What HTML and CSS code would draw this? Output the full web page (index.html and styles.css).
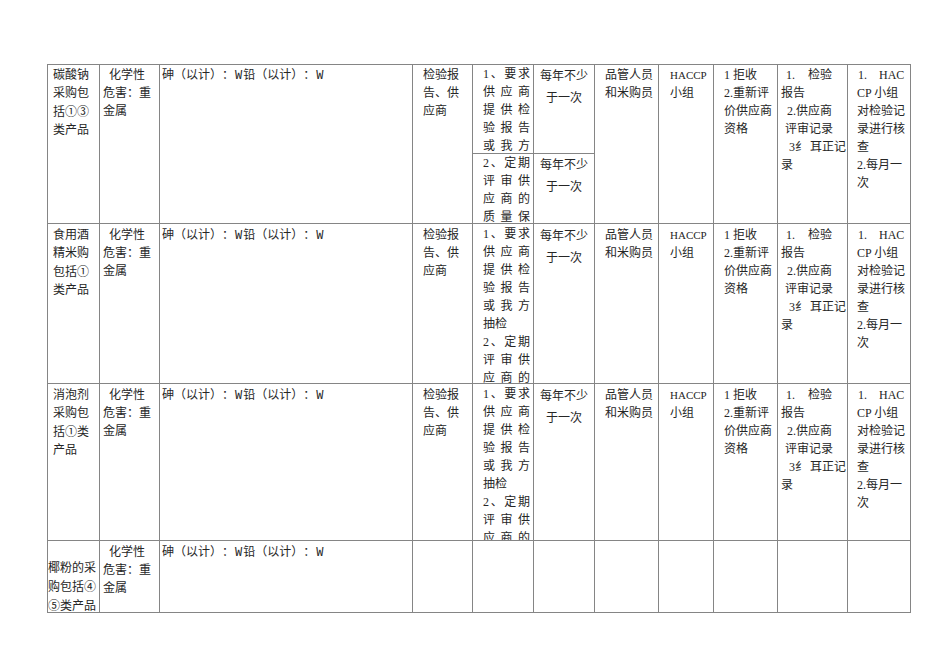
FILE: index.html
```html
<!DOCTYPE html>
<html lang="zh-CN">
<head>
<meta charset="utf-8">
<title>采购控制表</title>
<link rel="stylesheet" href="styles.css">
</head>
<body>
<div class="sheet">
  <div class="grid">
    <!-- row 1 -->
    <div class="c c1 s2">碳酸钠<br>采购包<br>括<span class="cn">①</span><span class="cn">③</span><br>类产品</div>
    <div class="c c2 s2">化学性危害：重金属</div>
    <div class="c c3 s2">砷（以计）：<span class="w">W</span>铅（以计）：<span class="w">W</span></div>
    <div class="c c4 s2">检验报告、供应商</div>
    <div class="c c5"><div class="p">1、要求供应商提供检验报告或我方抽检</div></div>
    <div class="c c6">每年不少于一次</div>
    <div class="c c7 s2">品管人员和米购员</div>
    <div class="c c8 s2"><span class="lat">HACCP</span><br>小组</div>
    <div class="c c9 s2">1 拒收<br>2.重新评<br>价供应商<br>资格</div>
    <div class="c c10 s2">
      <div><span class="n1">1.</span>检验</div>
      <div>报告</div>
      <div class="i6">2.供应商</div>
      <div class="i4">评审记录</div>
      <div class="i8">3纟 耳正记</div>
      <div>录</div>
    </div>
    <div class="c c11 s2">
      <div><span class="n2">1.</span>HAC</div>
      <div>CP 小组</div>
      <div>对检验记</div>
      <div>录进行核</div>
      <div>查</div>
      <div>2.每月一</div>
      <div>次</div>
    </div>
    <div class="c c5 sub"><div class="p">2、定期评审供应商的质量保证能力</div></div>
    <div class="c c6 sub">每年不少于一次</div>

    <!-- row 2 -->
    <div class="c c1 lo">食用酒<br>精米购<br>包括<span class="cn">①</span><br>类产品</div>
    <div class="c c2 lo">化学性危害：重金属</div>
    <div class="c c3 lo">砷（以计）：<span class="w">W</span>铅（以计）：<span class="w">W</span></div>
    <div class="c c4 lo">检验报告、供应商</div>
    <div class="c c5 lo"><div class="p">1、要求供应商提供检验报告或我方抽检</div><div class="p">2、定期评审供应商的质量保证能力</div></div>
    <div class="c c6 lo">每年不少于一次</div>
    <div class="c c7 lo">品管人员和米购员</div>
    <div class="c c8 lo"><span class="lat">HACCP</span><br>小组</div>
    <div class="c c9 lo">1 拒收<br>2.重新评<br>价供应商<br>资格</div>
    <div class="c c10 lo">
      <div><span class="n1">1.</span>检验</div>
      <div>报告</div>
      <div class="i6">2.供应商</div>
      <div class="i4">评审记录</div>
      <div class="i8">3纟 耳正记</div>
      <div>录</div>
    </div>
    <div class="c c11 lo">
      <div><span class="n2">1.</span>HAC</div>
      <div>CP 小组</div>
      <div>对检验记</div>
      <div>录进行核</div>
      <div>查</div>
      <div>2.每月一</div>
      <div>次</div>
    </div>

    <!-- row 3 -->
    <div class="c c1 lo">消泡剂<br>采购包<br>括<span class="cn">①</span>类<br>产品</div>
    <div class="c c2 lo">化学性危害：重金属</div>
    <div class="c c3 lo">砷（以计）：<span class="w">W</span>铅（以计）：<span class="w">W</span></div>
    <div class="c c4 lo">检验报告、供应商</div>
    <div class="c c5 lo"><div class="p">1、要求供应商提供检验报告或我方抽检</div><div class="p">2、定期评审供应商的质量保证能力</div></div>
    <div class="c c6 lo">每年不少于一次</div>
    <div class="c c7 lo">品管人员和米购员</div>
    <div class="c c8 lo"><span class="lat">HACCP</span><br>小组</div>
    <div class="c c9 lo">1 拒收<br>2.重新评<br>价供应商<br>资格</div>
    <div class="c c10 lo">
      <div><span class="n1">1.</span>检验</div>
      <div>报告</div>
      <div class="i6">2.供应商</div>
      <div class="i4">评审记录</div>
      <div class="i8">3纟 耳正记</div>
      <div>录</div>
    </div>
    <div class="c c11 lo">
      <div><span class="n2">1.</span>HAC</div>
      <div>CP 小组</div>
      <div>对检验记</div>
      <div>录进行核</div>
      <div>查</div>
      <div>2.每月一</div>
      <div>次</div>
    </div>

    <!-- row 4 -->
    <div class="c c1 last lo">椰粉的采<br>购包括<span class="cn">④</span><br><span class="cn">⑤</span>类产品</div>
    <div class="c c2 lo">化学性危害：重金属</div>
    <div class="c c3 lo">砷（以计）：<span class="w">W</span>铅（以计）：<span class="w">W</span></div>
    <div class="c"></div>
    <div class="c"></div>
    <div class="c"></div>
    <div class="c"></div>
    <div class="c"></div>
    <div class="c"></div>
    <div class="c"></div>
    <div class="c"></div>
  </div>
</div>
</body>
</html>
```

FILE: styles.css
```css
html, body {
  margin: 0;
  padding: 0;
  background: #ffffff;
}

.sheet {
  padding: 64px 0 0 47px;
}

.grid {
  display: grid;
  width: max-content;
  grid-template-columns: 51px 59px 252px 59px 60px 60px 63px 54px 63px 69px 62px;
  grid-template-rows: 88px 69px 159px 156px 71px;
  gap: 1px;
  padding: 1px;
  background: #858585;
}

.c {
  background: #ffffff;
  overflow: hidden;
  font-family: "Liberation Serif", "Noto Sans CJK SC", serif;
  font-size: 12px;
  line-height: 18px;
  color: #262626;
  padding-top: 1px;
  box-sizing: border-box;
  text-spacing-trim: space-all;
  white-space: normal;
}

.s2 {
  grid-row: span 2;
}

.lo {
  padding-top: 2px;
}

.cn {
  display: inline-block;
  width: 12px;
  text-align: center;
  text-indent: 0;
  font-family: "Noto Sans CJK SC", sans-serif;
  font-size: 12px;
}

.c1 {
  padding-left: 5px;
  padding-right: 0;
  white-space: nowrap;
}

.c1.last {
  padding-left: 0;
  padding-top: 18px;
}

.c2 {
  padding-left: 3px;
  padding-right: 5px;
  text-indent: 6px;
}

.c3 {
  padding-left: 2px;
}

.w {
  font-family: "Liberation Mono", monospace;
  font-size: 12px;
  margin: 0 1px;
}

.c4 {
  padding-left: 10px;
  padding-right: 3px;
}

.c5 {
  padding-left: 10px;
  padding-right: 3px;
  padding-top: 0;
  text-align: justify;
}

.c5.lo {
  padding-top: 1px;
}

.c6 {
  text-align: center;
  line-height: 22px;
  padding: 0 4px;
}

.c6.lo {
  padding-top: 1px;
}

.c7 {
  padding-left: 10px;
}

.c8 {
  padding-left: 11px;
}

.lat {
  font-size: 11px;
}

.c9 {
  padding-left: 10px;
}

.c10 {
  padding-left: 3px;
}

.n1 {
  display: inline-block;
  margin-left: 5px;
  width: 22px;
}

.i6 {
  padding-left: 6px;
}

.i4 {
  padding-left: 4px;
}

.i8 {
  padding-left: 8px;
}

.c11 {
  padding-left: 9px;
}

.n2 {
  display: inline-block;
  margin-left: 1px;
  width: 21px;
}
```
